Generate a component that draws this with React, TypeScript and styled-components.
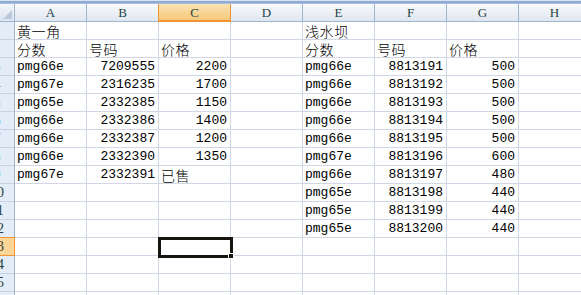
import styled, { createGlobalStyle, css } from "styled-components";

const GlobalStyle = createGlobalStyle`
  html, body {
    margin: 0;
    padding: 0;
    background: #ffffff;
    overflow: hidden;
  }
`;

const COL_W = 72;
const ROW_H = 18;

const Sheet = styled.div`
  width: 581px;
  height: 295px;
  overflow: hidden;
  display: flex;
  flex-direction: column;
  background: #ffffff;
  font-family: "Liberation Mono", "Noto Sans CJK SC", monospace;
`;

const TopStrip = styled.div`
  flex: none;
  height: 4px;
  box-sizing: border-box;
  background: linear-gradient(#d9e4f2 0 1px, #8fabd3 1px 3px, #e7eef7 3px);
  border-bottom: 1px solid #a9c0dd;
  width: 100%;
`;

const Row = styled.div`
  display: flex;
  flex: none;
  height: ${ROW_H}px;
`;

const HeaderRow = styled(Row)`
  height: 18px;
`;

// top-left corner with the little select-all triangle
const Corner = styled.div`
  flex: none;
  width: 15px;
  box-sizing: border-box;
  background: linear-gradient(#f3f6fa, #dbe4f0);
  border-right: 1px solid #9eb6ce;
  border-bottom: 1px solid #9eb6ce;
  position: relative;

  &::after {
    content: "";
    position: absolute;
    right: 2px;
    bottom: 2px;
    width: 0;
    height: 0;
    border-left: 9px solid transparent;
    border-bottom: 9px solid #b9c8da;
  }
`;

const ColHeader = styled.div<{ $selected?: boolean }>`
  flex: none;
  width: ${COL_W}px;
  box-sizing: border-box;
  display: flex;
  align-items: center;
  justify-content: center;
  padding-top: 1px;
  font-family: "Liberation Serif", serif;
  font-size: 13px;
  color: #27413e;
  background: linear-gradient(#f9fbfd, #dfe6f0);
  border-right: 1px solid #9eb6ce;
  border-bottom: 1px solid #9eb6ce;

  ${({ $selected }) =>
    $selected &&
    css`
      background: linear-gradient(#fbe2b4, #f5c979);
      border-left: 1px solid #f29436;
      border-right: 1px solid #f29436;
      border-bottom: 2px solid #f29436;
      margin-left: -1px;
      width: ${COL_W + 1}px;
    `}
`;

const RowHeader = styled.div<{ $selected?: boolean }>`
  flex: none;
  width: 15px;
  box-sizing: border-box;
  overflow: hidden;
  display: flex;
  align-items: center;
  background: #e4ecf7;
  border-right: 1px solid #9eb6ce;
  border-bottom: 1px solid #c5d3e4;
  font-family: "Liberation Serif", serif;
  font-size: 14px;
  color: #27413e;

  ${({ $selected }) =>
    $selected &&
    css`
      background: #fdd594;
      border-top: 1px solid #f29436;
      border-bottom: 1px solid #f29436;
      border-right: 1px solid #f29436;
      margin-top: -1px;
      height: ${ROW_H + 1}px;
    `}
`;

// row numbers sit in a wider column than what is visible, so only their right part shows
const RowNumber = styled.span`
  flex: none;
  width: 26px;
  margin-left: -16px;
  text-align: center;
`;

const Cell = styled.div<{ $align?: "left" | "right"; $active?: boolean }>`
  flex: none;
  width: ${COL_W}px;
  box-sizing: border-box;
  display: flex;
  align-items: flex-end;
  justify-content: ${({ $align }) => ($align === "right" ? "flex-end" : "flex-start")};
  padding: 0 3px 0 2px;
  border-right: 1px solid #d0d7e5;
  border-bottom: 1px solid #d0d7e5;
  font-size: 13px;
  line-height: 16px;
  color: #000000;
  white-space: nowrap;
  position: relative;

  ${({ $active }) =>
    $active &&
    css`
      &::after {
        content: "";
        position: absolute;
        left: -1px;
        top: -1px;
        width: 75px;
        height: 21px;
        box-sizing: border-box;
        border: 3px solid #18140f;
        z-index: 2;
      }
      &::before {
        content: "";
        position: absolute;
        right: -4px;
        bottom: -4px;
        width: 4px;
        height: 4px;
        background: #18140f;
        border: 1px solid #ffffff;
        z-index: 3;
      }
    `}
`;

const Han = styled.span`
  display: inline-block;
  font-family: "Noto Sans CJK SC", sans-serif;
  font-size: 14px;
  font-weight: 300;
  line-height: 15px;
  letter-spacing: 0.6px;
`;

const COLUMNS = ["A", "B", "C", "D", "E", "F", "G", "H"];

type CellValue = string | number | null;

// left block: 黄一角, right block: 浅水坝
const left: [string, number, CellValue][] = [
  ["pmg66e", 7209555, 2200],
  ["pmg67e", 2316235, 1700],
  ["pmg65e", 2332385, 1150],
  ["pmg66e", 2332386, 1400],
  ["pmg66e", 2332387, 1200],
  ["pmg66e", 2332390, 1350],
  ["pmg67e", 2332391, "已售"],
];

const right: [string, number, number][] = [
  ["pmg66e", 8813191, 500],
  ["pmg66e", 8813192, 500],
  ["pmg66e", 8813193, 500],
  ["pmg66e", 8813194, 500],
  ["pmg66e", 8813195, 500],
  ["pmg67e", 8813196, 600],
  ["pmg66e", 8813197, 480],
  ["pmg65e", 8813198, 440],
  ["pmg65e", 8813199, 440],
  ["pmg65e", 8813200, 440],
];

const ROW_COUNT = 16;
const ACTIVE_ROW = 13;
const ACTIVE_COL = 2;

function buildRows(): CellValue[][] {
  const rows: CellValue[][] = Array.from({ length: ROW_COUNT }, () =>
    Array(COLUMNS.length).fill(null)
  );
  rows[0][0] = "黄一角";
  rows[0][4] = "浅水坝";
  rows[1] = ["分数", "号码", "价格", null, "分数", "号码", "价格", null];
  left.forEach(([a, b, c], i) => {
    rows[i + 2][0] = a;
    rows[i + 2][1] = b;
    rows[i + 2][2] = c;
  });
  right.forEach(([e, f, g], i) => {
    rows[i + 2][4] = e;
    rows[i + 2][5] = f;
    rows[i + 2][6] = g;
  });
  return rows;
}

const hasHan = (v: string) => /[\u4e00-\u9fff]/.test(v);

const CellContent = ({ value }: { value: CellValue }) => {
  if (value === null) return null;
  if (typeof value === "string" && hasHan(value)) return <Han>{value}</Han>;
  return <>{value}</>;
};

export default function App() {
  const rows = buildRows();

  return (
    <>
      <GlobalStyle />
      <Sheet>
        <TopStrip />
        <HeaderRow>
          <Corner />
          {COLUMNS.map((c, i) => (
            <ColHeader key={c} $selected={i === ACTIVE_COL}>
              {c}
            </ColHeader>
          ))}
        </HeaderRow>

        {rows.map((cells, r) => (
          <Row key={r}>
            <RowHeader $selected={r + 1 === ACTIVE_ROW}>
              <RowNumber>{r + 1}</RowNumber>
            </RowHeader>
            {cells.map((value, c) => (
              <Cell
                key={c}
                $align={typeof value === "number" ? "right" : "left"}
                $active={r + 1 === ACTIVE_ROW && c === ACTIVE_COL}
              >
                <CellContent value={value} />
              </Cell>
            ))}
          </Row>
        ))}
      </Sheet>
    </>
  );
}
